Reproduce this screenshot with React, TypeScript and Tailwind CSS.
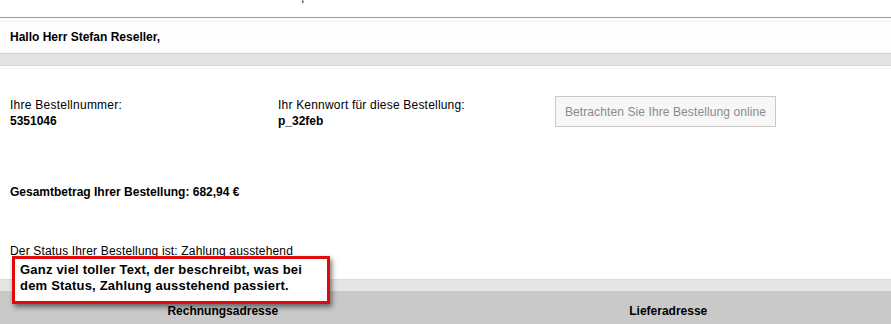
import React from "react";

export default function App() {
  return (
    <div className="relative h-[324px] w-[891px] overflow-hidden bg-white font-['Liberation_Sans',Arial,sans-serif] text-[12px] text-black">
      {/* cut-off line above */}
      <div className="h-[17px] overflow-hidden">
        <div className="-mt-[9px] pl-[301px] text-[12px] leading-[14px] text-black">,</div>
      </div>

      <div className="h-px bg-[#9a9a9a]" />

      {/* greeting */}
      <div className="border-t-[3px] border-[#fbfbfb]">
        <div className="flex h-[32px] items-center border-t border-b border-[#f3f3f3] bg-[#fefefe] pl-[10px] font-bold">
          Hallo Herr Stefan Reseller,
        </div>
      </div>

      <div className="h-[13px] border-y border-[#d3d3d3] bg-[#e4e4e4]" />
      <div className="mt-[2px] h-px bg-[#f3f3f3]" />

      {/* order info */}
      <div className="flex pt-[28px]">
        <div className="w-[278px] pl-[10px] leading-[16px]">
          <div className="tracking-[0.25px]">Ihre Bestellnummer:</div>
          <div className="font-bold">5351046</div>
        </div>
        <div className="w-[277px] leading-[16px]">
          <div className="tracking-[0.2px]">Ihr Kennwort für diese Bestellung:</div>
          <div className="font-bold">p_32feb</div>
        </div>
        <div className="-mt-[1px]">
          <button className="h-[31px] w-[221px] border border-[#c9c9c9] bg-[#f7f7f7] text-[12px] tracking-[0.1px] text-[#8a8a8a]">
            Betrachten Sie Ihre Bestellung online
          </button>
        </div>
      </div>

      <div className="pl-[10px] pt-[55px] font-bold leading-[16px]">
        Gesamtbetrag Ihrer Bestellung: 682,94 €
      </div>

      <div className="pl-[10px] pt-[43px] leading-[16px] tracking-[0.16px]">
        Der Status Ihrer Bestellung ist: Zahlung ausstehend
      </div>

      {/* address headers */}
      <div className="mt-[20px] h-[12px] border-t border-[#dcdcdc] bg-[#e5e5e5]" />
      <div className="flex h-[40px] bg-[#c9c9c9] font-bold">
        <div className="flex-1 pt-[11px] text-center">Rechnungsadresse</div>
        <div className="flex-1 pt-[11px] text-center">Lieferadresse</div>
      </div>

      {/* status tooltip */}
      <div className="absolute left-[12px] top-[256px] h-[48px] w-[318px] border-[3px] border-[#e10a0a] bg-white px-[5px] pt-[3px] text-[13px] font-bold leading-[16px] tracking-[0.2px] shadow-[2px_3px_5px_rgba(0,0,0,0.5)]">
        Ganz viel toller Text, der beschreibt, was bei
        <br />
        dem Status, Zahlung ausstehend passiert.
      </div>
    </div>
  );
}
